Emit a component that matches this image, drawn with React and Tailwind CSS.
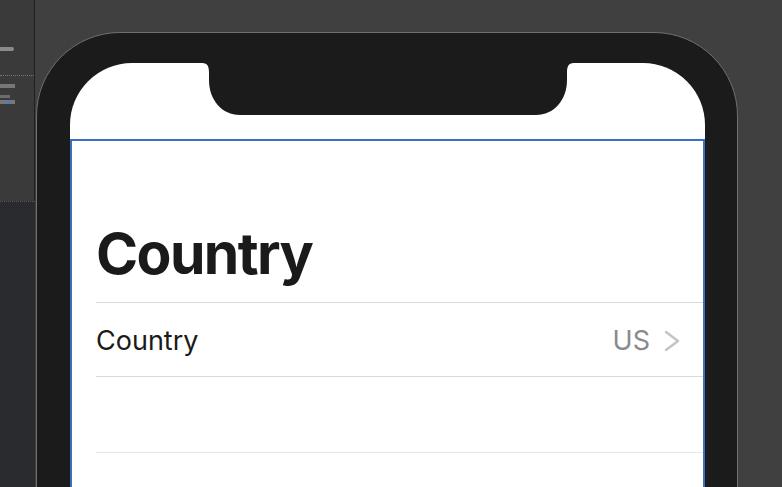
import React from 'react'

const Sidebar = () => {
    return (
        <div className="flex w-[35px] shrink-0 flex-col">
            <div className="h-[201px] border-r border-[#1f1f1f] bg-[#3a3a3a] pt-[47px]">
                <div className="h-[4px] w-[14px] rounded-r-sm bg-[#8a8a8a]" />
                <div className="mt-[24px] border-t border-dotted border-[#777]" />
                <div className="mt-[8px] h-[4px] w-[15px] bg-[#777]" />
                <div className="mt-[7px] h-[3px] w-[10px] bg-[#6c6c6c]" />
                <div className="mt-[2px] flex h-[4px] w-[15px] items-center bg-[#777]">
                    <div className="ml-[7px] h-[3px] w-[3px] bg-[#3f7bd8]" />
                </div>
            </div>
            <div className="flex-1 border-t border-dotted border-[#555] bg-[#2a2b2f]" />
        </div>
    )
}

const Notch = () => {
    return (
        <svg
            className="absolute left-1/2 top-0 -translate-x-1/2"
            width="372"
            height="52"
            viewBox="0 0 372 52"
        >
            <path
                d="M0 0 H372 C366 0 365 4 365 10 V17 C365 37 352 52 334 52 H38 C20 52 7 37 7 17 V10 C7 4 6 0 0 0 Z"
                fill="#1b1b1b"
            />
        </svg>
    )
}

const Chevron = () => (
    <svg width="18" height="22" viewBox="0 0 18 22" className="ml-[13px]">
        <polyline
            points="3,2 15,11 3,20"
            fill="none"
            stroke="#c4c4c8"
            strokeWidth="2.4"
            strokeLinecap="round"
            strokeLinejoin="round"
        />
    </svg>
)

const Screen = () => {
    return (
        <div className="relative h-full bg-white rounded-t-[62px]">
            <Notch />
            <div className="h-[76px]" />
            <div className="h-[400px] border-2 border-b-0 border-[#3d6fc0] pl-[24px] pt-[79px]">
                <h1 className="text-[57px] font-bold leading-[68px] tracking-[-0.028em] text-[#1a1a1a]">Country</h1>
                <div className="mt-[14px] border-t border-[#d6dbe0]">
                    <div className="flex h-[74px] items-center justify-between border-b border-[#d6dbe0] pr-[22px] pt-[3px]">
                        <span className="text-[27px] text-[#1a1a1a]">Country</span>
                        <div className="flex items-center">
                            <span className="text-[27px] text-[#8a8a8e]">US</span>
                            <Chevron />
                        </div>
                    </div>
                    <div className="h-[76px] border-b border-[#e4e6e8]" />
                </div>
            </div>
        </div>
    )
}

export default function App() {
    return (
        <div
            className="flex h-[487px] w-[782px] overflow-hidden bg-[#404040]"
            style={{ fontFamily: 'Inter, "Noto Sans", sans-serif' }}
        >
            <Sidebar />
            <div className="ml-[1px] mt-[32px] h-[600px] w-[702px] shrink-0 rounded-[84px] border border-[#707070] bg-[#1b1b1b] pl-[33px] pr-[32px] pt-[30px]">
                <Screen />
            </div>
        </div>
    )
}
